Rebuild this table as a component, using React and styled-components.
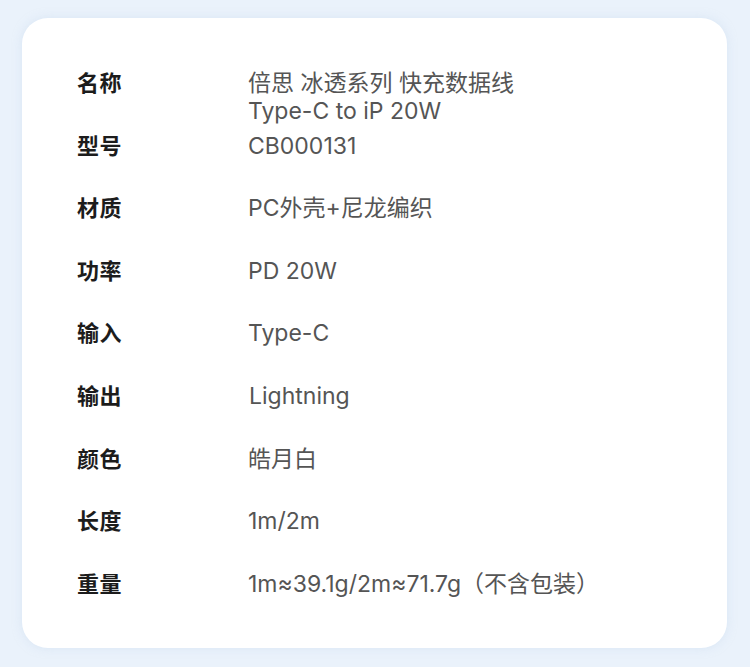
import React from "react";
import styled, { createGlobalStyle } from "styled-components";

const Global = createGlobalStyle`
  html, body { margin: 0; padding: 0; background: #eaf2fb; }
  body { font-family: "Noto Sans CJK SC", "Noto Sans", sans-serif; }
`;

const Page = styled.div`
  width: 750px;
  height: 667px;
  box-sizing: border-box;
  padding: 18px 23px 19px 22px;
  background: #eaf2fb;
`;

const Card = styled.div`
  height: 100%;
  box-sizing: border-box;
  background: #ffffff;
  border-radius: 26px;
  box-shadow: 0 0 10px rgba(200, 218, 240, 0.5);
  padding: 50px 40px 50px 55px;
  display: grid;
  grid-auto-rows: 62.6px;
`;

const Row = styled.div`
  display: grid;
  grid-template-columns: 171px 1fr;
  align-items: start;
  line-height: 28px;
`;

const Label = styled.div`
  font-size: 22px;
  font-weight: 700;
  color: #1c1c1c;
  letter-spacing: 0.5px;
  margin-top: -1px;
`;

const Value = styled.div`
  font-family: "Inter", "Noto Sans CJK SC", sans-serif;
  font-size: 23px;
  font-weight: 400;
  color: #555555;
  white-space: pre-line;
  margin-top: 1px;
  padding-left: ${(p) => p.$shift || 0}px;
`;

const rows = [
  ["名称", "倍思 冰透系列 快充数据线\nType-C to iP 20W"],
  ["型号", "CB000131"],
  ["材质", "PC外壳+尼龙编织"],
  ["功率", "PD 20W"],
  ["输入", "Type-C"],
  ["输出", "Lightning", 1],
  ["颜色", "皓月白"],
  ["长度", "1m/2m"],
  ["重量", "1m≈39.1g/2m≈71.7g（不含包装）"],
];

export default function App() {
  return (
    <Page>
      <Global />
      <Card>
        {rows.map(([k, v, s]) => (
          <Row key={k}>
            <Label>{k}</Label>
            <Value $shift={s}>{v}</Value>
          </Row>
        ))}
      </Card>
    </Page>
  );
}
